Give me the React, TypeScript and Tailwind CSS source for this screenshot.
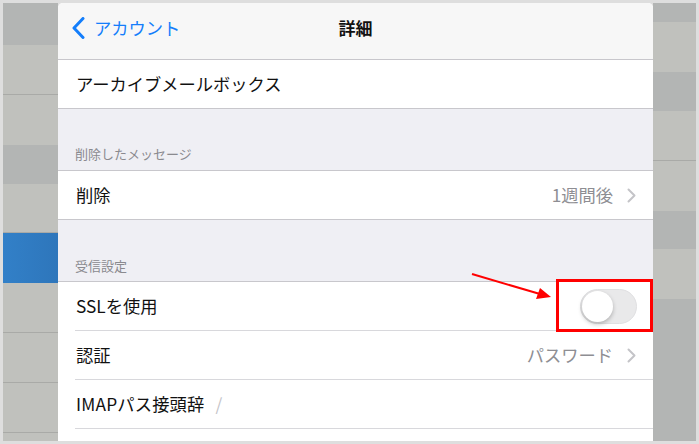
import React from "react";

const font = { fontFamily: '"Noto Sans CJK JP", "Noto Sans", sans-serif' };

function Chevron() {
  return (
    <svg width="9" height="15" viewBox="0 0 9 15" className="shrink-0">
      <path d="M1.5 1.5 L7.5 7.5 L1.5 13.5" fill="none" stroke="#c4c4c8" strokeWidth="2" strokeLinecap="round" strokeLinejoin="round" />
    </svg>
  );
}

export default function App() {
  return (
    <div className="relative w-[699px] h-[444px] bg-[#dedede] p-[3px] overflow-hidden" style={font}>
      <div className="flex h-full">
        {/* left dimmed strip */}
        <div className="w-[55px] flex flex-col">
          <div className="h-[42px] bg-[#b3b5b4]" />
          <div className="h-[50px] bg-[#c0c1bd] border-b border-[#a9aaa7]" />
          <div className="h-[50px] bg-[#c0c1bd]" />
          <div className="h-[39px] bg-[#b3b5b4]" />
          <div className="h-[49px] bg-[#c0c1bd] border-b border-[#a9aaa7]" />
          <div className="h-[50px] bg-gradient-to-r from-[#3280c8] to-[#2e76bb]" />
          <div className="h-[50px] bg-[#c0c1bd] border-b border-[#a9aaa7]" />
          <div className="h-[50px] bg-[#c0c1bd] border-b border-[#a9aaa7]" />
          <div className="h-[50px] bg-[#c0c1bd] border-b border-[#a9aaa7]" />
          <div className="flex-1 bg-[#c0c1bd]" />
        </div>

        {/* panel */}
        <div className="w-[595px] flex flex-col bg-white rounded-t-[5px] overflow-hidden">
          <div className="h-[57px] shrink-0 bg-[#f7f7f7] border-b border-[#c8c7cc] relative flex items-center justify-center pb-[6px]">
            <div className="absolute left-[14px] top-0 h-full pb-[6px] flex items-center gap-[9px] text-[#147efb] text-[17.25px]">
              <svg width="13" height="22" viewBox="0 0 13 22">
                <path d="M11 1.5 L2 11 L11 20.5" fill="none" stroke="#147efb" strokeWidth="3" strokeLinecap="round" strokeLinejoin="round" />
              </svg>
              <span>アカウント</span>
            </div>
            <span className="text-[17px] font-bold text-[#111]">詳細</span>
          </div>

          <div className="h-[49px] shrink-0 border-b border-[#c8c7cc] flex items-center pl-[18px] text-[17.25px] text-[#111]">
            アーカイブメールボックス
          </div>

          <div className="h-[62px] shrink-0 bg-[#efeff4] border-b border-[#c8c7cc] flex items-end pl-[17px] pb-[7px] text-[13px] text-[#8a8a8f]">
            削除したメッセージ
          </div>

          <div className="h-[49px] shrink-0 border-b border-[#c8c7cc] flex items-center justify-between pl-[18px] pr-[17px] text-[17.25px]">
            <span className="text-[#111]">削除</span>
            <div className="flex items-center gap-[14px] text-[#8e8e93]">
              <span>1週間後</span>
              <Chevron />
            </div>
          </div>

          <div className="h-[62px] shrink-0 bg-[#efeff4] border-b border-[#c8c7cc] flex items-end pl-[17px] pb-[6px] text-[13px] text-[#8a8a8f]">
            受信設定
          </div>

          <div className="pl-[17px] flex flex-col">
            <div className="h-[49px] shrink-0 border-b border-[#d8d8dc] flex items-center justify-between pl-[1px] pr-[16px] text-[17.25px]">
              <span className="text-[#111]">SSLを使用</span>
              <div className="w-[57px] h-[35px] rounded-full bg-[#e9e9ea] border border-[#e0e0e2] relative">
                <div className="absolute left-[1px] top-[1px] w-[31px] h-[31px] rounded-full bg-white shadow-[0_2px_4px_rgba(0,0,0,0.25)]" />
              </div>
            </div>
            <div className="h-[49px] shrink-0 border-b border-[#d8d8dc] flex items-center justify-between pl-[1px] pr-[17px] text-[17.25px]">
              <span className="text-[#111]">認証</span>
              <div className="flex items-center gap-[14px] text-[#8e8e93]">
                <span>パスワード</span>
                <Chevron />
              </div>
            </div>
            <div className="h-[49px] shrink-0 border-b border-[#d8d8dc] flex items-center pl-[1px] text-[17.25px]">
              <span className="text-[#111] tracking-[0.2px]">IMAPパス接頭辞</span>
              <span className="ml-[11px] text-[#c4c4c8]">/</span>
            </div>
          </div>
          <div className="flex-1 bg-white" />
        </div>

        {/* right dimmed strip */}
        <div className="w-[43px] flex flex-col">
          <div className="h-[19px] bg-[#b3b5b4]" />
          <div className="h-[50px] bg-[#c0c1bd]" />
          <div className="h-[39px] bg-[#b3b5b4]" />
          <div className="h-[50px] bg-[#c0c1bd] border-b border-[#a9aaa7]" />
          <div className="h-[50px] bg-[#c0c1bd]" />
          <div className="h-[38px] bg-[#b3b5b4]" />
          <div className="h-[50px] bg-[#c0c1bd]" />
          <div className="flex-1 bg-[#b3b5b4]" />
        </div>
      </div>

      {/* annotation: red box */}
      <div className="absolute left-[556px] top-[279px] w-[97px] h-[53px] border-[3px] border-[#ff0000]" />
      {/* annotation: arrow */}
      <svg className="absolute left-0 top-0" width="699" height="444" viewBox="0 0 699 444">
        <line x1="472" y1="274" x2="540" y2="294" stroke="#ff0000" strokeWidth="2" />
        <polygon points="551,297 536,299 540,288" fill="#ff0000" />
      </svg>
    </div>
  );
}
